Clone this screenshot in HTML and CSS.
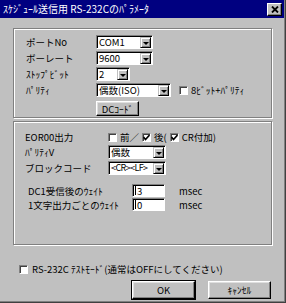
FILE: index.html
```html
<!DOCTYPE html>
<html lang="ja">
<head>
  <meta charset="UTF-8" />
  <title>ｽｹｼﾞｭｰﾙ送信用 RS-232Cのﾊﾟﾗﾒｰﾀ</title>
  <link rel="stylesheet" href="styles.css">
</head>
<body>
  <div class="window">
    <div class="titlebar">
      <span class="title">ｽｹｼﾞｭｰﾙ送信用 RS-232Cのﾊﾟﾗﾒｰﾀ</span>
      <span class="close">
        <svg width="8" height="7" viewBox="0 0 8 7"><path d="M1 0.5 L7 6.5 M7 0.5 L1 6.5" stroke="#000" stroke-width="1.8" fill="none"/></svg>
      </span>
    </div>

    <div class="content">
      <div class="group port">
        <div class="grid">
          <span class="label">ポートNo</span>
          <span class="combo w57"><span class="value">COM1</span><span class="drop"></span></span>

          <span class="label">ボーレート</span>
          <span class="combo w57"><span class="value">9600</span><span class="drop"></span></span>

          <span class="label">ｽﾄｯﾌﾟﾋﾞｯﾄ</span>
          <span class="combo w34"><span class="value">2</span><span class="drop"></span></span>

          <span class="label">ﾊﾟﾘﾃｨ</span>
          <span class="inline">
            <span class="combo w75"><span class="value">偶数(ISO)</span><span class="drop"></span></span>
            <span class="check"><span class="box"></span>8ﾋﾞｯﾄ+ﾊﾟﾘﾃｨ</span>
          </span>
        </div>
        <button class="btn dc">DCｺｰﾄﾞ</button>
      </div>

      <div class="group output">
        <div class="grid wide">
          <span class="label">EOR00出力</span>
          <span class="inline checks">
            <span class="check"><span class="box"></span>前／</span>
            <span class="check"><span class="box on"><svg width="7" height="7" viewBox="0 0 7 7"><path d="M0.5 3 L2.5 5.5 L6.5 1" stroke="#000" stroke-width="1.6" fill="none"/></svg></span>後(</span>
            <span class="check"><span class="box on"><svg width="7" height="7" viewBox="0 0 7 7"><path d="M0.5 3 L2.5 5.5 L6.5 1" stroke="#000" stroke-width="1.6" fill="none"/></svg></span>CR付加)</span>
          </span>

          <span class="label">ﾊﾟﾘﾃｨV</span>
          <span class="combo w58"><span class="value">偶数</span><span class="drop"></span></span>

          <span class="label">ブロックコード</span>
          <span class="combo w58"><span class="value tight">&lt;CR&gt;&lt;LF&gt;</span><span class="drop"></span></span>
        </div>

        <div class="waits">
          <span class="label">DC1受信後のｳｪｲﾄ</span>
          <span class="edit"><span class="caret"></span>3</span>
          <span class="unit">msec</span>

          <span class="label">1文字出力ごとのｳｪｲﾄ</span>
          <span class="edit"><span class="caret"></span>0</span>
          <span class="unit">msec</span>
        </div>
      </div>

      <div class="check test"><span class="box"></span>RS-232C ﾃｽﾄﾓｰﾄﾞ(通常はOFFにしてください)</div>

      <div class="actions">
        <button class="btn action default">OK</button>
        <button class="btn action">ｷｬﾝｾﾙ</button>
      </div>
    </div>
  </div>
</body>
</html>
```

FILE: styles.css
```css
:root {
  --face: #c0c0c0;
  --shadow: #808080;
  --light: #ffffff;
  --dark: #000000;
  --title: #000080;
}

* {
  box-sizing: border-box;
}

body {
  margin: 0;
  padding: 0;
  background: var(--face);
  font-family: "Noto Sans CJK JP", "Noto Sans", sans-serif;
  font-size: 9.5px;
  line-height: 12px;
  color: #000;
}

.window {
  width: 286px;
  height: 303px;
  background: var(--face);
  border-right: 1px solid #404040;
  border-bottom: 1px solid #404040;
  box-shadow: inset -1px -1px 0 var(--shadow);
}

.titlebar {
  height: 18px;
  margin-right: 1px;
  background: var(--title);
  color: #fff;
  display: flex;
  align-items: center;
  justify-content: space-between;
  padding: 0 2px 0 3px;
  font-size: 10px;
}

.close {
  width: 15px;
  height: 13px;
  background: var(--face);
  border: 1px solid;
  border-color: var(--light) var(--dark) var(--dark) var(--light);
  box-shadow: inset -1px -1px 0 var(--shadow);
  display: flex;
  align-items: center;
  justify-content: center;
}

.content {
  padding: 10px 13px 0 13px;
}

.group {
  border: 1px solid var(--shadow);
  box-shadow: inset 1px 1px 0 var(--light), 1px 1px 0 var(--light);
}

.port {
  height: 90px;
  padding: 6px 0 0 12px;
}

.output {
  height: 124px;
  margin-top: 3px;
  padding: 9px 0 0 11px;
}

.grid {
  display: grid;
  grid-template-columns: 70px auto;
  row-gap: 2px;
  align-items: center;
}

.grid.wide {
  grid-template-columns: 83px auto;
  grid-template-rows: 12px 14px 14px;
  row-gap: 2px;
}

.grid.wide .combo:first-of-type {
  margin-top: 1px;
}

.label {
  white-space: nowrap;
}

.inline {
  display: flex;
  align-items: center;
  gap: 8px;
}

.checks {
  gap: 3px;
}

.combo {
  height: 14px;
  display: flex;
  align-items: center;
  background: #fff;
  border: 1px solid;
  border-color: var(--shadow) var(--light) var(--light) var(--shadow);
  box-shadow: inset 1px 1px 0 var(--dark);
  padding: 0 1px 0 2px;
}

.combo .value {
  flex: 1;
  white-space: nowrap;
  overflow: hidden;
}

.combo .tight {
  letter-spacing: -0.6px;
  font-size: 9px;
}

.w57 { width: 57px; }
.w34 { width: 34px; }
.w75 { width: 75px; }
.w58 { width: 58px; }

.drop {
  width: 11px;
  height: 11px;
  margin-top: 1px;
  flex-shrink: 0;
  background: var(--face);
  border: 1px solid;
  border-color: var(--face) var(--dark) var(--dark) var(--face);
  box-shadow: inset 1px 1px 0 var(--light), inset -1px -1px 0 var(--shadow);
  display: flex;
  align-items: center;
  justify-content: center;
}

.drop::after {
  content: "";
  border-left: 3px solid transparent;
  border-right: 3px solid transparent;
  border-top: 3px solid #000;
  margin-top: 1px;
}

.check {
  display: flex;
  align-items: center;
  gap: 3px;
  white-space: nowrap;
}

.box {
  width: 9px;
  height: 9px;
  flex-shrink: 0;
  background: #fff;
  border: 1px solid;
  border-color: var(--shadow) var(--light) var(--light) var(--shadow);
  box-shadow: inset 1px 1px 0 #404040;
  display: flex;
  align-items: center;
  justify-content: center;
}

.btn {
  font-family: inherit;
  font-size: 9.5px;
  line-height: 12px;
  color: #000;
  background: var(--face);
  border: 1px solid;
  border-color: var(--light) var(--dark) var(--dark) var(--light);
  box-shadow: inset -1px -1px 0 var(--shadow), inset 1px 1px 0 #dfdfdf;
  padding: 0;
  cursor: pointer;
}

.dc {
  display: block;
  width: 43px;
  height: 15px;
  margin: 4px 0 0 70px;
}

.waits {
  display: grid;
  grid-template-columns: 104px 33px auto;
  grid-template-rows: 13px 13px;
  row-gap: 1px;
  align-items: center;
  margin: 9px 0 0 3px;
}

.edit {
  height: 13px;
  display: flex;
  align-items: center;
  background: #fff;
  border: 1px solid;
  border-color: var(--shadow) var(--light) var(--light) var(--shadow);
  box-shadow: inset 1px 1px 0 var(--dark);
  padding-left: 2px;
}

.caret {
  width: 1px;
  height: 9px;
  background: #000;
  margin-right: 1px;
}

.unit {
  padding-left: 14px;
}

.test {
  margin: 18px 0 0 6px;
  gap: 4px;
}

.actions {
  display: flex;
  justify-content: flex-end;
  gap: 13px;
  margin: 6px 1px 0 0;
}

.action {
  width: 63px;
  height: 18px;
}

.default {
  outline: 1px solid #000;
}
```
